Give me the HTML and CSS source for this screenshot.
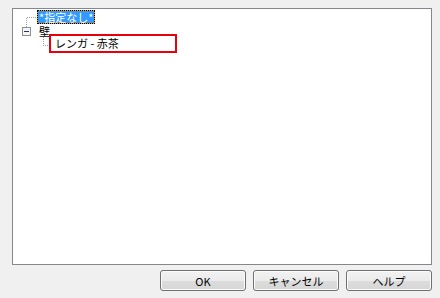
FILE: index.html
```html
<!DOCTYPE html>
<html lang="ja">
<head>
    <meta charset="UTF-8">
    <title>マテリアル選択</title>
    <link rel="stylesheet" href="styles.css">
</head>
<body>
    <div class="tree">
        <div class="row row-root">
            <svg class="lines" width="24" height="14">
                <path d="M13.5 7.5 H24 M13.5 7.5 V14" class="dots"/>
            </svg>
            <span class="item selected">*指定なし*</span>
        </div>
        <div class="row row-group">
            <svg class="lines" width="25" height="10">
                <path d="M13.5 0 V3" class="dots"/>
                <rect x="9.5" y="3.5" width="8" height="8" class="box"/>
                <path d="M11 7.5 H16" class="minus"/>
            </svg>
            <span class="item">壁</span>
        </div>
        <div class="row row-child">
            <svg class="lines" width="36" height="19">
                <path d="M30.5 3 V11.5 H36" class="dots"/>
            </svg>
            <div class="edit">レンガ - 赤茶</div>
        </div>
    </div>
    <div class="buttons">
        <button class="btn">OK</button>
        <button class="btn">キャンセル</button>
        <button class="btn">ヘルプ</button>
    </div>
</body>
</html>
```

FILE: styles.css
```css
body {
    margin: 0;
    background: #f0f0f0;
    font-family: "Noto Sans CJK JP", "Noto Sans", sans-serif;
    font-size: 11px;
    color: #000;
}
.tree {
    box-sizing: border-box;
    width: 420px;
    height: 257px;
    margin: 8px 0 0 12px;
    padding-top: 1px;
    background: #fff;
    border: 1px solid #828790;
}
.row {
    display: flex;
    align-items: flex-start;
}
.row-root {
    height: 14px;
}
.row-group {
    height: 10px;
}
.row-child {
    height: 19px;
}
.lines {
    display: block;
    flex: none;
    overflow: visible;
}
.dots {
    fill: none;
    stroke: #a0a0a0;
    stroke-width: 1;
    stroke-dasharray: 1 1;
    shape-rendering: crispEdges;
}
.box {
    fill: #f4f4f4;
    stroke: #8e8f8f;
    shape-rendering: crispEdges;
}
.minus {
    stroke: #1c3a6c;
    stroke-width: 1;
    shape-rendering: crispEdges;
}
.item {
    line-height: 14px;
    height: 14px;
    white-space: nowrap;
}
.selected {
    box-sizing: border-box;
    padding: 0 1px;
    color: #fff;
    border: 1px dotted #000;
    background: linear-gradient(#3399ff, #3399ff) padding-box, #ff9900 border-box;
    line-height: 12px;
}
.row-group .item {
    height: 10px;
    margin: 2px 0 0 1px;
    line-height: 10px;
}
.edit {
    box-sizing: border-box;
    width: 128px;
    height: 19px;
    padding-left: 4px;
    line-height: 15px;
    border: 2px solid #e8000b;
    background: #fff;
}
.buttons {
    display: flex;
    justify-content: flex-end;
    gap: 7px;
    margin: 5px 8px 0 0;
}
.btn {
    box-sizing: border-box;
    width: 86px;
    height: 21px;
    padding: 0;
    font-family: inherit;
    font-size: 11px;
    color: #000;
    border: 1px solid #707070;
    border-radius: 3px;
    background: linear-gradient(#f2f2f2 0%, #ebebeb 50%, #dddddd 51%, #d6d6d6 100%);
    box-shadow: inset 0 0 0 1px #fcfcfc;
}
```
